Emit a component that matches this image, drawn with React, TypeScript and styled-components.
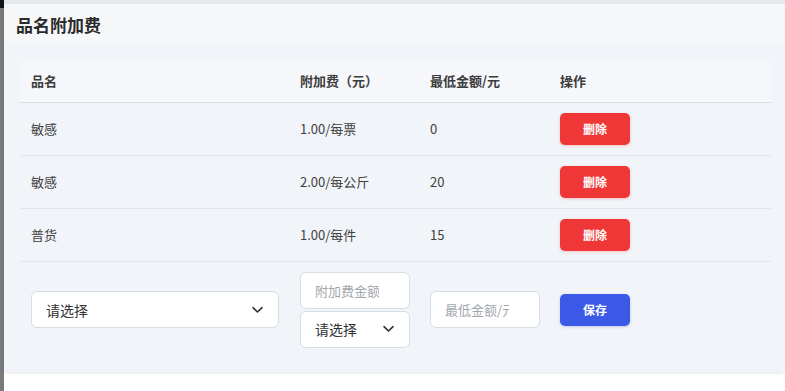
import React from "react";
import styled, { createGlobalStyle, css } from "styled-components";

const GlobalStyle = createGlobalStyle`
  html, body {
    margin: 0;
    padding: 0;
    background: #ffffff;
    font-family: "Noto Sans CJK SC", "Noto Sans", sans-serif;
    color: #3a3a3a;
  }
  * {
    box-sizing: border-box;
  }
`;

const Page = styled.div`
  display: flex;
  width: 785px;
  height: 391px;
  overflow: hidden;
`;

const BackdropEdge = styled.div`
  width: 4px;
  flex-shrink: 0;
  background: linear-gradient(#161616 0 8px, #7a7a7a 8px 100%);
`;

const Main = styled.div`
  flex: 1;
  display: flex;
  flex-direction: column;
`;

const TopStrip = styled.div`
  height: 4px;
  background: #e6e9ed;
`;

const Modal = styled.div`
  width: 780px;
  display: flex;
  flex-direction: column;
  box-shadow: 0 1px 3px rgba(0, 0, 0, 0.12);
  border-radius: 0 0 3px 3px;
`;

const ModalHeader = styled.div`
  height: 41px;
  display: flex;
  align-items: center;
  padding-left: 12px;
  background: #f6f7f9;
`;

const Title = styled.h2`
  margin: 0;
  font-size: 17px;
  line-height: 20px;
  font-weight: 700;
  color: #2a2a2a;
`;

const ModalBody = styled.div`
  background: #f1f4f8;
  padding: 16px 13px 14px 16px;
`;

const Table = styled.table`
  width: 751px;
  border-collapse: collapse;
  table-layout: fixed;
`;

const HeadCell = styled.th<{ width?: number }>`
  ${(props) =>
    props.width &&
    css`
      width: ${props.width}px;
    `}
  height: 41px;
  padding: 0 0 0 11px;
  text-align: left;
  font-size: 13px;
  line-height: 16px;
  font-weight: 700;
  color: #3c3c3c;
  background: #f5f7fa;
  border-bottom: 1px solid #d9dee4;
`;

const Row = styled.tr<{ last?: boolean }>`
  border-bottom: ${(props) => (props.last ? "none" : "1px solid #e2e6eb")};
`;

const Cell = styled.td<{ form?: boolean }>`
  height: ${(props) => (props.form ? "97px" : "53px")};
  padding: ${(props) => (props.form ? "10px 0 10px 11px" : "0 0 0 11px")};
  vertical-align: middle;
  font-size: 13px;
  line-height: 16px;
  color: #404040;
`;

const ActionButton = styled.button<{ variant: "danger" | "primary" }>`
  width: 70px;
  height: 32px;
  border: none;
  border-radius: 5px;
  display: flex;
  align-items: center;
  justify-content: center;
  font-family: inherit;
  font-size: 12px;
  font-weight: 700;
  color: #ffffff;
  cursor: pointer;
  background: ${(props) => (props.variant === "danger" ? "#ef3737" : "#3a59e6")};
  box-shadow: 0 1px 3px
    ${(props) =>
      props.variant === "danger"
        ? "rgba(239, 55, 55, 0.25)"
        : "rgba(58, 89, 230, 0.25)"};
`;

const fieldBase = css`
  height: 37px;
  border: 1px solid #d8dde3;
  border-radius: 6px;
  background: #ffffff;
  font-family: inherit;
  outline: none;
`;

const SelectWrap = styled.div<{ width: number }>`
  position: relative;
  width: ${(props) => props.width}px;
`;

const StyledSelect = styled.select`
  ${fieldBase};
  width: 100%;
  appearance: none;
  padding: 0 30px 0 14px;
  font-size: 14px;
  color: #333333;
  cursor: pointer;
`;

const Arrow = styled.span`
  position: absolute;
  right: 16px;
  top: 50%;
  transform: translateY(-50%);
  display: flex;
  pointer-events: none;
`;

const TextInput = styled.input<{ width: number }>`
  ${fieldBase};
  width: ${(props) => props.width}px;
  padding: 0 30px 0 14px;
  font-size: 13px;
  color: #333333;

  &::placeholder {
    color: #a3a7ad;
  }
`;

const FieldStack = styled.div`
  display: flex;
  flex-direction: column;
  gap: 2px;
`;

const ChevronDown = () => (
  <svg width="11" height="7" viewBox="0 0 11 7" fill="none">
    <path
      d="M1 1.2l4.5 4.3L10 1.2"
      stroke="#2f2f2f"
      strokeWidth="1.6"
      strokeLinecap="round"
      strokeLinejoin="round"
    />
  </svg>
);

const Select = ({ width }: { width: number }) => (
  <SelectWrap width={width}>
    <StyledSelect defaultValue="">
      <option value="">请选择</option>
    </StyledSelect>
    <Arrow>
      <ChevronDown />
    </Arrow>
  </SelectWrap>
);

const rows = [
  { name: "敏感", fee: "1.00/每票", min: "0" },
  { name: "敏感", fee: "2.00/每公斤", min: "20" },
  { name: "普货", fee: "1.00/每件", min: "15" },
];

export default function App() {
  return (
    <>
      <GlobalStyle />
      <Page>
        <BackdropEdge />
        <Main>
          <TopStrip />
          <Modal>
            <ModalHeader>
              <Title>品名附加费</Title>
            </ModalHeader>
            <ModalBody>
              <Table>
                <thead>
                  <tr>
                    <HeadCell width={269}>品名</HeadCell>
                    <HeadCell width={130}>附加费（元）</HeadCell>
                    <HeadCell width={130}>最低金额/元</HeadCell>
                    <HeadCell>操作</HeadCell>
                  </tr>
                </thead>
                <tbody>
                  {rows.map((row, i) => (
                    <Row key={i}>
                      <Cell>{row.name}</Cell>
                      <Cell>{row.fee}</Cell>
                      <Cell>{row.min}</Cell>
                      <Cell>
                        <ActionButton variant="danger">删除</ActionButton>
                      </Cell>
                    </Row>
                  ))}
                  <Row last>
                    <Cell form>
                      <Select width={248} />
                    </Cell>
                    <Cell form>
                      <FieldStack>
                        <TextInput width={110} placeholder="附加费金额" />
                        <Select width={110} />
                      </FieldStack>
                    </Cell>
                    <Cell form>
                      <TextInput width={110} placeholder="最低金额/元" />
                    </Cell>
                    <Cell form>
                      <ActionButton variant="primary">保存</ActionButton>
                    </Cell>
                  </Row>
                </tbody>
              </Table>
            </ModalBody>
          </Modal>
        </Main>
      </Page>
    </>
  );
}
